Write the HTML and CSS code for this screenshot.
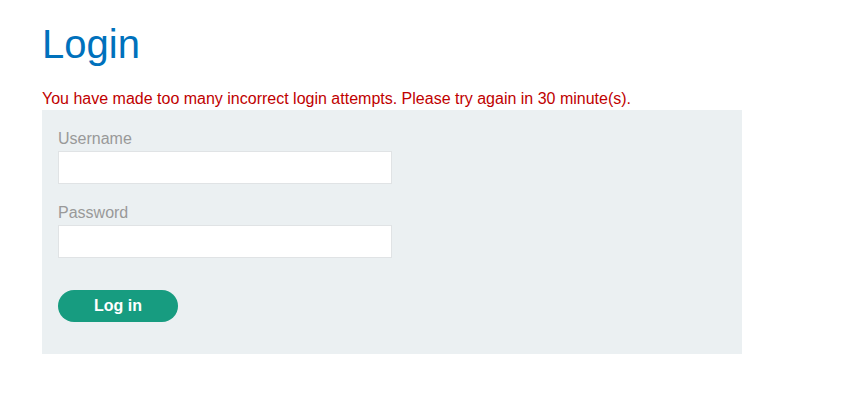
FILE: index.html
```html
<!DOCTYPE html>
<html>
<head>
<meta charset="utf-8">
<link rel="stylesheet" href="styles.css">
</head>
<body>
<div class="container">
  <h1 class="title">Login</h1>
  <p class="error">You have made too many incorrect login attempts. Please try again in 30 minute(s).</p>
  <form class="login-form">
    <label class="field-label" for="username">Username</label>
    <input class="field-input" id="username" type="text">
    <label class="field-label second" for="password">Password</label>
    <input class="field-input" id="password" type="password">
    <button class="submit" type="button">Log in</button>
  </form>
</div>
</body>
</html>
```

FILE: styles.css
```css
html, body {
  margin: 0;
  padding: 0;
  background: #ffffff;
}
body {
  font-family: "Liberation Sans", Arial, sans-serif;
}
.container {
  padding: 21px 0 0 42px;
}
.title {
  margin: 0;
  font-size: 40px;
  line-height: 46px;
  font-weight: normal;
  color: #0071bc;
}
.error {
  margin: 23px 0 0 0;
  font-size: 16px;
  line-height: 18px;
  color: #c00000;
}
.login-form {
  margin-top: 2px;
  width: 700px;
  box-sizing: border-box;
  background: #ebf0f2;
  padding: 20px 16px 32px 16px;
  display: flex;
  flex-direction: column;
  align-items: flex-start;
}
.field-label {
  display: block;
  font-size: 16px;
  line-height: 18px;
  color: #999999;
  margin-bottom: 3px;
}
.field-label.second {
  margin-top: 20px;
}
.field-input {
  box-sizing: border-box;
  width: 334px;
  height: 33px;
  margin: 0;
  border: 1px solid #e0e3e5;
  background: #ffffff;
  padding: 0 8px;
  font-size: 16px;
  outline: none;
}
.submit {
  margin-top: 32px;
  width: 120px;
  height: 32px;
  border: none;
  border-radius: 16px;
  background: #179c80;
  color: #ffffff;
  font-family: "Liberation Sans", Arial, sans-serif;
  font-size: 16px;
  font-weight: bold;
  padding: 0;
  cursor: pointer;
}
```
